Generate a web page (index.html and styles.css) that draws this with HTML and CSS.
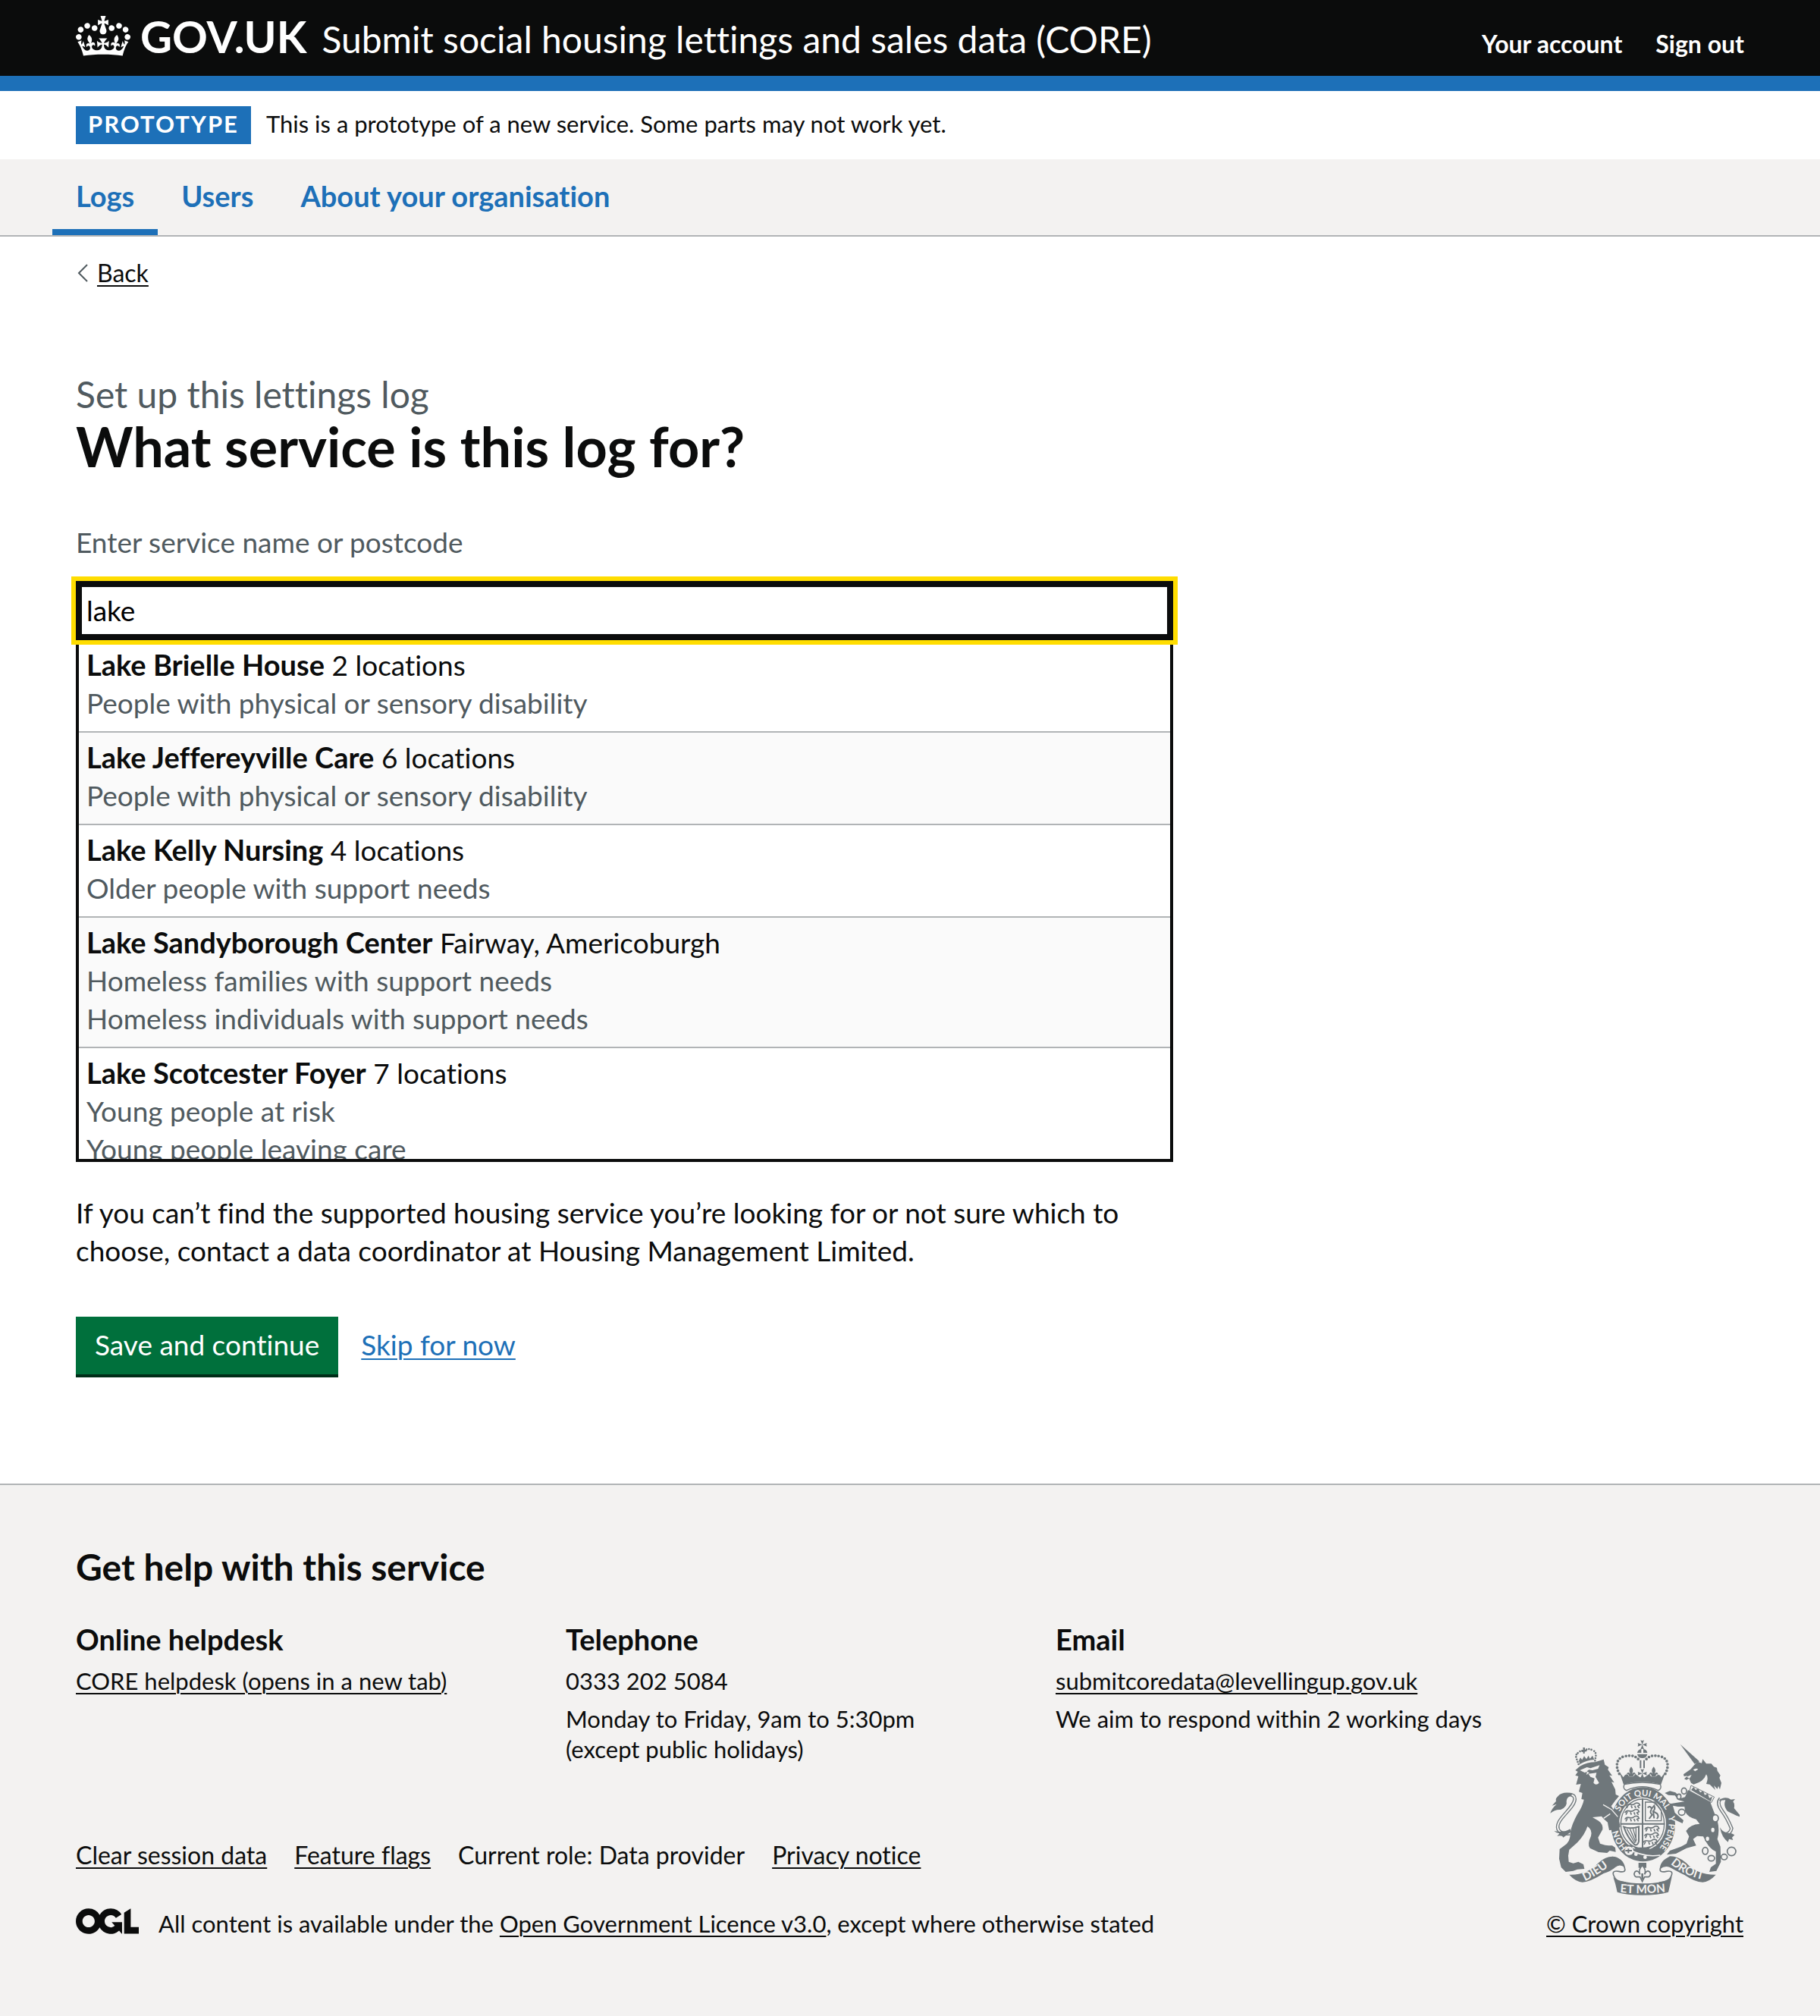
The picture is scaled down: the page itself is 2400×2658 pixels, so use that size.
FILE: index.html
```html
<!DOCTYPE html>
<html lang="en">
<head>
<meta charset="utf-8">
<meta name="viewport" content="width=device-width, initial-scale=1">
<title>What service is this log for? - Submit social housing lettings and sales data (CORE)</title>
<link rel="stylesheet" href="styles.css">
</head>
<body>

<header class="header">
  <div class="header-inner">
    <a class="logo" href="#"><svg class="logo-crown" viewBox="0 0 132 97" aria-hidden="true"><path fill="currentColor" fill-rule="evenodd" d="M25 30.2c3.5 1.5 7.7-.2 9.1-3.7 1.5-3.6-.2-7.8-3.9-9.2-3.6-1.4-7.6.3-9.1 3.9-1.4 3.5.3 7.5 3.9 9zM9 39.5c3.6 1.5 7.8-.2 9.2-3.7 1.5-3.6-.2-7.8-3.9-9.1-3.6-1.5-7.6.2-9.1 3.8-1.4 3.5.3 7.5 3.8 9zM4.4 57.2c3.5 1.5 7.7-.2 9.1-3.8 1.5-3.6-.2-7.7-3.9-9.1-3.5-1.5-7.6.3-9.1 3.8-1.4 3.5.3 7.6 3.9 9.1zm38.3-21.4c3.5 1.5 7.7-.2 9.1-3.8 1.5-3.6-.2-7.7-3.9-9.1-3.6-1.5-7.6.3-9.1 3.8-1.3 3.6.4 7.7 3.9 9.1zm64.4-5.6c-3.6 1.5-7.8-.2-9.1-3.7-1.5-3.6.2-7.8 3.8-9.2 3.6-1.4 7.7.3 9.2 3.9 1.3 3.5-.4 7.5-3.9 9zm15.9 9.3c-3.6 1.5-7.7-.2-9.1-3.7-1.5-3.6.2-7.8 3.7-9.1 3.6-1.5 7.7.2 9.2 3.8 1.5 3.5-.3 7.5-3.8 9zm4.7 17.7c-3.6 1.5-7.8-.2-9.2-3.8-1.5-3.6.2-7.7 3.9-9.1 3.6-1.5 7.7.3 9.2 3.8 1.3 3.5-.4 7.6-3.9 9.1zM89.3 35.8c-3.6 1.5-7.8-.2-9.2-3.8-1.4-3.6.2-7.7 3.9-9.1 3.6-1.5 7.7.3 9.2 3.8 1.4 3.6-.3 7.7-3.9 9.1zM69.7 17.7l8.9 4.7V9.3l-8.9 2.8c-.2-.3-.5-.6-.9-.9L72.4 0H59.6l3.5 11.2c-.3.3-.6.5-.9.9l-8.8-2.8v13.1l8.8-4.7c.3.3.6.7.9.9l-5 15.4v.1c-.2.8-.4 1.6-.4 2.4 0 4.1 3.1 7.5 7 8.1h.2c.3 0 .7.1 1 .1.4 0 .7 0 1-.1h.2c4-.6 7.1-4.1 7.1-8.1 0-.8-.1-1.7-.4-2.4V34l-5.1-15.4c.4-.2.7-.6 1-.9zM66 92.8c16.9 0 32.8 1.1 47.1 3.2 4-16.9 8.9-26.7 14-33.5l-9.6-3.4c1 4.9 1.1 7.2 0 10.2-1.5-1.4-3-4.3-4.2-8.7L108.6 76c2.8-2 5-3.2 7.5-3.3-4.4 9.4-10 11.9-13.6 11.2-4.3-.8-6.3-4.6-5.6-7.9 1-4.7 5.7-5.9 8-.5 4.3-8.7-3-11.4-7.6-8.8 7.1-7.2 7.9-13.5 2.1-21.1-8 6.1-8.1 12.3-4.5 20.8-4.7-5.4-12.1-2.5-9.5 6.2 3.4-5.2 7.9-2 7.2 3.1-.6 4.3-6.4 7.8-13.5 7.2-10.3-.9-10.9-8-11.2-13.8 2.5-.5 7.1 1.8 11 7.3L80.2 60c-4.1 4.4-8 5.3-12.3 5.4 1.4-4.4 8-11.6 8-11.6H55.5s6.4 7.2 7.9 11.6c-4.2-.1-8-1-12.3-5.4l1.4 16.4c3.9-5.5 8.5-7.7 10.9-7.3-.3 5.8-.9 12.8-11.1 13.8-7.2.6-12.9-2.9-13.5-7.2-.7-5 3.8-8.3 7.1-3.1 2.7-8.7-4.6-11.6-9.4-6.2 3.7-8.5 3.6-14.7-4.6-20.8-5.8 7.6-5 13.9 2.2 21.1-4.7-2.6-11.9.1-7.7 8.8 2.3-5.5 7.1-4.2 8.1.5.7 3.3-1.3 7.1-5.7 7.9-3.5.7-9-1.8-13.5-11.2 2.5.1 4.7 1.3 7.5 3.3l-4.7-15.4c-1.2 4.4-2.7 7.2-4.3 8.7-1.1-3-.9-5.3 0-10.2l-9.5 3.4c5 6.9 9.9 16.7 14 33.5 14.8-2.1 30.8-3.2 47.7-3.2z"/></svg><span>GOV.UK</span></a>
    <a class="service-name" href="#">Submit social housing lettings and sales data (CORE)</a>
    <nav class="account" aria-label="Account">
      <a class="account-link" href="#">Your account</a>
      <a class="account-link" href="#">Sign out</a>
    </nav>
  </div>
</header>

<div class="phase">
  <strong class="tag">PROTOTYPE</strong>
  <span class="phase-text">This is a prototype of a new service. Some parts may not work yet.</span>
</div>

<nav class="primary-nav" aria-label="Primary">
  <a class="nav-link nav-link-current" href="#" aria-current="page">Logs</a>
  <a class="nav-link" href="#">Users</a>
  <a class="nav-link" href="#">About your organisation</a>
</nav>

<div class="page">
  <a class="back" href="#">
    <svg class="back-icon" viewBox="0 0 14 24" aria-hidden="true"><path d="M13 1 2 12l11 11" fill="none" stroke="#505a5f" stroke-width="2"/></svg>
    <span class="back-text">Back</span>
  </a>

  <main class="main">
    <form class="form">
      <span class="caption">Set up this lettings log</span>
      <h1 class="title">What service is this log for?</h1>
      <label class="label" for="service">Enter service name or postcode</label>
      <div class="autocomplete">
        <input class="input" id="service" type="text" role="combobox" aria-expanded="true" aria-controls="service-list" autocomplete="off" value="lake">
        <ul class="menu" id="service-list" role="listbox">
          <li class="option" role="option"><b>Lake Brielle House</b> 2 locations <span class="need">People with physical or sensory disability</span></li>
          <li class="option" role="option"><b>Lake Jeffereyville Care</b> 6 locations <span class="need">People with physical or sensory disability</span></li>
          <li class="option" role="option"><b>Lake Kelly Nursing</b> 4 locations <span class="need">Older people with support needs</span></li>
          <li class="option" role="option"><b>Lake Sandyborough Center</b> Fairway, Americoburgh <span class="need">Homeless families with support needs</span> <span class="need">Homeless individuals with support needs</span></li>
          <li class="option" role="option"><b>Lake Scotcester Foyer</b> 7 locations <span class="need">Young people at risk</span> <span class="need">Young people leaving care</span></li>
        </ul>
      </div>
      <p class="help">If you can’t find the supported housing service you’re looking for or not sure which to choose, contact a data coordinator at Housing Management Limited.</p>
      <div class="actions">
        <button class="button" type="submit">Save and continue</button>
        <a class="skip" href="#">Skip for now</a>
      </div>
    </form>
  </main>
</div>

<footer class="footer">
  <div class="footer-main">
    <h2 class="footer-title">Get help with this service</h2>
    <div class="contacts">
      <section class="contact">
        <h3 class="contact-title">Online helpdesk</h3>
        <p class="contact-line"><a class="footer-link" href="#">CORE helpdesk (opens in a new tab)</a></p>
      </section>
      <section class="contact">
        <h3 class="contact-title">Telephone</h3>
        <p class="contact-line">0333 202 5084</p>
        <p class="contact-line">Monday to Friday, 9am to 5:30pm<br>(except public holidays)</p>
      </section>
      <section class="contact">
        <h3 class="contact-title">Email</h3>
        <p class="contact-line"><a class="footer-link" href="#">submitcoredata@levellingup.gov.uk</a></p>
        <p class="contact-line">We aim to respond within 2 working days</p>
      </section>
    </div>
    <ul class="footer-links">
      <li><a class="footer-link" href="#">Clear session data</a></li>
      <li><a class="footer-link" href="#">Feature flags</a></li>
      <li>Current role: Data provider</li>
      <li><a class="footer-link" href="#">Privacy notice</a></li>
    </ul>
    <div class="licence">
      <svg class="ogl" viewBox="0 0 483.2 195.7" role="img" aria-label="Open Government Licence"><path fill="currentColor" d="M421.5 142.8V.1l-50.7 32.3v161.1h112.4v-50.7zm-122.3-9.6A47.12 47.12 0 0 1 221 97.8c0-26 21.1-47.1 47.1-47.1 16.7 0 31.4 8.7 39.7 21.8l42.7-27.2A97.63 97.63 0 0 0 268.1 0c-36.5 0-68.3 20.1-85.1 49.7A98 98 0 0 0 97.8 0C43.9 0 0 43.9 0 97.8s43.9 97.8 97.8 97.8c36.5 0 68.3-20.1 85.1-49.7a97.76 97.76 0 0 0 149.6 25.4l19.4 22.2h3v-87.8h-80l24.3 27.5zM97.8 145c-26 0-47.1-21.1-47.1-47.1s21.1-47.1 47.1-47.1 47.1 21.1 47.1 47.1S123.8 145 97.8 145"/></svg>
      <span>All content is available under the <a class="footer-link" href="#">Open Government Licence v3.0</a>, except where otherwise stated</span>
    </div>
  </div>
  <a class="copyright" href="#">
    <svg class="crest" viewBox="72 70 750 615" aria-hidden="true">
      <defs>
        <g id="cross"><path d="M0 0-7-18Q0-14 7-18ZL18-7Q14 0 18 7ZL7 18Q0 14-7 18ZL-18 7Q-14 0-18-7Z"/></g>
        <g id="fleur"><path d="M0-18C10-6 8 2 3 10C10 2 19 4 17 16C14 8 9 12 8 20H-8C-9 12-14 8-17 16C-19 4-10 2-3 10C-8 2-10-6 0-18Z"/></g>
        <g id="passant"><path d="M-28 2Q-22-8-12-5T6-6Q14-14 24-9L28-2 20 2 26 10M-18-2-24 10M-6 0-2 10M8 0 12 10" fill="none" stroke="#6f777b" stroke-width="5"/></g>
        <path id="garter-left" d="M348 354A103 112 0 0 1 543 395"/>
        <path id="garter-right" d="M540 372Q552 440 496 510"/>
        <path id="garter-hon" d="M378 496Q346 460 338 412"/>
        <path id="ribbon-left" d="M210 628Q265 604 322 556"/>
        <path id="ribbon-mid" d="M349 673Q437 681 532 671"/>
        <path id="ribbon-right" d="M549 560Q600 606 682 624"/>
      </defs>
      <g fill="#6f777b">
        <!-- crown -->
        <use href="#cross" x="437" y="89"/>
        <path d="M417 121Q420 107 433 106V121ZM441 106Q455 107 457 121H441ZM417 126H457Q454 142 437 142T417 126Z"/>
        <path d="M346 204C330 174 334 142 366 135S415 136 424 150M528 204C544 174 540 142 508 135S459 136 450 150" fill="none" stroke="#6f777b" stroke-width="11" stroke-linecap="round" stroke-dasharray="0 13"/>
        <path d="M427 150H433V182H427ZM441 150H447V182H441Z"/>
        <use href="#cross" x="437" y="203"/>
        <use href="#fleur" x="393" y="194"/>
        <use href="#fleur" x="482" y="194"/>
        <path d="M346 196Q356 210 362 218Q370 202 380 208L385 215H401L410 205Q422 214 428 218H446L464 205 472 215H490Q504 200 512 218L529 196 511 246Q437 226 363 246Z"/>
        <path d="M366 246Q437 230 508 246Q516 262 500 270Q437 240 374 270Q358 262 366 246Z" fill="#f3f2f1" stroke="#6f777b" stroke-width="4"/>
        <!-- garter and shield -->
        <ellipse cx="440" cy="404" rx="127" ry="147"/>
        <ellipse cx="438" cy="402" rx="93" ry="105" fill="#f3f2f1"/>
        <ellipse cx="438" cy="402" rx="86" ry="98" fill="none" stroke="#6f777b" stroke-width="4"/>
        <path d="M435 302H441V500H435ZM350 399H526V405H350Z"/>
        <use href="#passant" x="399" y="330"/><use href="#passant" x="396" y="356"/><use href="#passant" x="396" y="382"/>
        <use href="#passant" x="475" y="422"/><use href="#passant" x="473" y="448"/><use href="#passant" x="468" y="474"/>
        <path d="M449 316H488L512 348V390H449Z" fill="none" stroke="#6f777b" stroke-width="4"/>
        <path d="M458 338Q468 328 474 342L484 330Q490 344 480 352L496 362Q504 374 494 382M474 344Q464 356 476 366L464 382M480 354 484 380" fill="none" stroke="#6f777b" stroke-width="6"/>
        <path d="M364 414Q390 424 423 413V472Q418 490 406 484Q378 456 364 414Z" fill="none" stroke="#6f777b" stroke-width="6"/>
        <path d="M376 422 408 478M388 422 412 476M400 420 414 468M412 418V470" fill="none" stroke="#6f777b" stroke-width="4"/>
        <path d="M404 492Q438 500 470 490L460 510Q436 516 412 506Z"/>
        <path d="M380 500Q440 536 508 526" fill="none" stroke="#f3f2f1" stroke-width="5"/>
        <circle cx="382" cy="508" r="20" fill="#f3f2f1"/>
        <path d="M398 494A20 20 0 1 0 394 526M382 500V518M370 508H396" fill="none" stroke="#6f777b" stroke-width="6"/>
        <circle cx="412" cy="522" r="7" fill="#f3f2f1"/><circle cx="448" cy="534" r="7" fill="#f3f2f1"/>
        <!-- lion -->
        <path d="M185 166 176 142Q172 128 182 122M250 152 254 128Q250 112 238 110M182 122Q196 108 206 116Q220 100 238 110" fill="none" stroke="#6f777b" stroke-width="8" stroke-linecap="round" stroke-dasharray="0 10"/>
        <path d="M202 100H210V108H217V116H209V124H203V117H197V109H203ZM186 152 192 140 199 149 207 134 216 146 224 132 230 144 240 132 246 146 248 148Q218 150 190 166Z"/>
        <path d="M172 190 190 174Q220 158 250 158L284 147 289 168 304 178 301 188 318 212 307 210 326 239 315 236 330 266 332 286 345 292 330 310 314 332 334 362 346 395 350 413 332 431 318 426 306 427 302 408 300 396 284 382 276 372 240 376 264 390Q282 402 280 424L262 456 270 480 290 486 304 488 318 488 330 496 332 513 308 508 298 517 264 514 230 498Q218 484 234 450Q240 424 220 412Q210 444 180 476L148 504 144 528 146 552 164 558 184 552 204 562 208 580 180 582 164 588 134 592 116 574 108 540 110 502 126 490Q154 474 152 436Q158 404 180 364Q202 330 206 306L196 304 200 280 186 275 194 244 175 247 184 214 172 210 182 196Z"/>
        <path d="M190 190 218 178 232 182 268 170 262 184 240 190 226 188 210 200ZM224 204 256 200 252 216 266 240Q254 252 244 240L248 222 232 216Z" fill="#f3f2f1"/>
        <path d="M206 190 224 200 216 206M282 326 316 346 340 374M284 380 310 362" fill="none" stroke="#f3f2f1" stroke-width="4"/>
        <path d="M150 440C112 446 92 424 108 394S168 334 170 304Q170 286 146 286" fill="none" stroke="#6f777b" stroke-width="14"/>
        <path d="M150 440C112 446 92 424 108 394S168 334 170 304Q170 286 146 286" fill="none" stroke="#f3f2f1" stroke-width="6"/>
        <path d="M158 280Q118 274 104 292Q92 302 96 312L80 330 98 324Q78 342 73 360Q92 344 114 346Q142 334 137 312 138 296 158 290ZM152 422Q128 438 88 430Q98 440 110 440L100 450Q120 446 124 456Q148 440 154 434Z"/>
        <!-- unicorn -->
        <path d="M587 87 663 155 644 165Z"/>
        <path d="M642 170 656 156 672 162 676 146 690 164 710 164 720 176 732 180 734 192 746 210 742 220 750 240 744 266 738 252 734 264 720 250 726 268 704 246 690 244Q700 220 690 206Q680 236 640 246L630 240 622 222 612 228 603 224 616 212 602 214 600 206 628 186Z"/>
        <path d="M638 188Q650 180 658 186L646 194ZM612 216 632 208 624 222Z" fill="#f3f2f1"/>
        <path d="M618 268 706 316Q718 350 734 388 744 430 734 462L746 492 748 552 730 588 702 592 708 574 728 560 728 512Q704 500 690 474L678 452 654 450 638 462 650 488 612 498 570 520 534 524 546 508 590 492 612 480 622 452 610 430Q626 404 664 402L650 384Q616 376 606 352L604 334 578 334 558 330 566 358 600 388 596 400 566 386 546 362 538 334 526 318 552 322 574 318 604 314 580 308 566 290 540 288 526 280 546 272 568 278 592 300 606 296Z"/>
        <path d="M630 250 722 296 710 318 624 272Z" fill="#f3f2f1" stroke="#6f777b" stroke-width="3"/>
        <path d="M630 268 640 256 648 268 658 262 666 278 678 272 684 288 696 282 702 300 714 294 708 314Z"/>
        <g stroke="#6f777b" stroke-width="5" fill="#f3f2f1">
          <ellipse cx="602" cy="272" rx="10" ry="12"/><ellipse cx="582" cy="294" rx="8" ry="10"/><ellipse cx="593" cy="356" rx="13" ry="12"/>
          <ellipse cx="726" cy="380" rx="12" ry="14"/><ellipse cx="716" cy="426" rx="9" ry="11"/><ellipse cx="695" cy="461" rx="9" ry="11"/>
          <ellipse cx="686" cy="509" rx="11" ry="14"/><ellipse cx="710" cy="538" rx="13" ry="11"/><ellipse cx="761" cy="533" rx="12" ry="11"/><circle cx="790" cy="511" r="17"/>
        </g>
        <path d="M746 302Q730 320 752 350T790 420Q786 442 762 444" fill="none" stroke="#6f777b" stroke-width="14"/>
        <path d="M746 302Q730 320 752 350T790 420Q786 442 762 444" fill="none" stroke="#f3f2f1" stroke-width="6"/>
        <path d="M738 310Q764 290 788 306L804 304 796 314Q804 324 800 340L822 366V374Q792 362 774 352 756 330 766 308ZM744 416Q756 440 790 440L802 446 792 456 796 466 780 462 776 474Q752 458 744 416Z"/>
        <!-- motto ribbon -->
        <path d="M318 534Q360 540 368 580 372 596 344 590 308 584 330 618 336 632 372 634" fill="none" stroke="#6f777b" stroke-width="5"/>
        <path d="M556 534Q514 540 508 580 504 596 532 590 568 584 546 618 540 632 504 634" fill="none" stroke="#6f777b" stroke-width="5"/>
        <path d="M148 603Q216 606 264 556 300 524 336 534 368 550 364 572 346 560 330 574 312 590 284 598 230 632 200 633 172 630 148 603Z"/>
        <path d="M728 603Q654 604 610 556 580 530 546 530 512 550 508 580 526 566 546 574 590 598 604 604 644 632 676 633 704 630 728 603Z"/>
        <path d="M322 612Q340 634 437 638 530 638 554 610 548 640 540 672 500 684 437 684 374 684 338 672 332 640 322 612Z"/>
        <path d="M422 556H453V576H422Z"/>
        <path d="M437 566Q454 584 446 602 454 582 466 592 474 604 462 612H446L437 630 428 612H412Q400 604 408 592 420 582 428 602 420 584 437 566Z" fill="#f3f2f1" stroke="#6f777b" stroke-width="5"/>
        <path d="M433 598H441V622H433Z"/>
      </g>
      <g class="motto">
        <text><textPath href="#garter-left">SOIT QUI MAL</textPath></text>
        <text><textPath href="#garter-right">Y PENSE</textPath></text>
        <text><textPath href="#garter-hon">HON</textPath></text>
        <text class="motto-ribbon"><textPath href="#ribbon-left">DIEU</textPath></text>
        <text class="motto-ribbon"><textPath href="#ribbon-mid">ET MON</textPath></text>
        <text class="motto-ribbon"><textPath href="#ribbon-right">DROIT</textPath></text>
      </g>
    </svg>
    <span class="copyright-text">© Crown copyright</span>
  </a>
</footer>

</body>
</html>
```
FILE: styles.css
```css
:root {
  --black: #0b0c0c;
  --blue: #1d70b8;
  --grey: #505a5f;
  --light: #f3f2f1;
  --border: #b1b4b6;
  --gutter: 100px;
}

* {
  box-sizing: border-box;
}

body {
  margin: 0;
  background: #fff;
  color: var(--black);
  font-family: Lato, "Liberation Sans", sans-serif;
  font-size: 31px;
  font-variant-ligatures: none;
  line-height: 40px;
}

h1, h2, h3, p, ul {
  margin: 0;
  padding: 0;
}

ul {
  list-style: none;
}

a {
  color: inherit;
  text-decoration-thickness: 2px;
  text-underline-offset: 4px;
}

/* Header */
.header {
  background: var(--black);
  border-bottom: 20px solid var(--blue);
  color: #fff;
}

.header-inner {
  display: flex;
  align-items: baseline;
  padding: 18px var(--gutter);
}

.header a {
  text-decoration: none;
}

.logo {
  margin-right: 20px;
  font-size: 58px;
  font-weight: 700;
  line-height: 60px;
}

.logo-crown {
  width: 72px;
  height: 53px;
  margin-right: 13px;
  vertical-align: -4px;
}

.service-name {
  font-size: 48px;
  line-height: 60px;
}

.account {
  display: flex;
  gap: 44px;
  margin-left: auto;
  font-size: 32px;
  font-weight: 700;
}

/* Phase banner */
.phase {
  display: flex;
  align-items: baseline;
  gap: 20px;
  padding: 20px var(--gutter);
}

.tag {
  padding: 0 16px 4px;
  background: var(--blue);
  color: #fff;
  line-height: 46px;
  letter-spacing: 2px;
}

/* Primary navigation */
.primary-nav {
  display: flex;
  padding: 0 69px;
  background: var(--light);
  border-bottom: 2px solid var(--border);
}

.nav-link {
  padding: 28px 31px 24px;
  border-bottom: 8px solid transparent;
  color: var(--blue);
  font-size: 38px;
  font-weight: 700;
  text-decoration: none;
}

.nav-link-current {
  border-bottom-color: var(--blue);
}

/* Page */
.page {
  padding: 28px var(--gutter) 140px;
}

.back {
  display: flex;
  align-items: center;
  gap: 12px;
  width: fit-content;
  padding-left: 2px;
  font-size: 32px;
  text-decoration: none;
}

.back-icon {
  width: 14px;
  height: 24px;
}

.back-text {
  text-decoration: underline;
  text-decoration-thickness: 2px;
  text-underline-offset: 4px;
}

.main {
  width: calc((100% + 60px) * 2 / 3 - 60px);
  margin-top: 110px;
}

.caption {
  display: block;
  color: var(--grey);
  font-size: 48px;
  line-height: 60px;
}

.title {
  font-size: 72px;
  line-height: 76px;
}

.label {
  display: block;
  margin: 64px 0 26px;
  color: var(--grey);
  font-size: 37px;
  line-height: 50px;
}

.input {
  position: relative;
  z-index: 1;
  display: block;
  width: 100%;
  height: 78px;
  padding: 0 10px 2px;
  border: 4px solid var(--black);
  border-radius: 0;
  outline: 6px solid #fd0;
  box-shadow: inset 0 0 0 4px var(--black);
  background: #fff;
  color: #000;
  font: inherit;
  font-size: 37px;
}

.menu {
  max-height: 688px;
  overflow-x: hidden;
  overflow-y: auto;
  scrollbar-width: none;
  border: 4px solid var(--black);
  border-top: 0;
  font-size: 37px;
  line-height: 50px;
}

.option {
  padding: 8px 10px 12px;
  border-bottom: 2px solid var(--border);
}

.option:nth-child(even) {
  background: #fafafa;
}

.option b {
  font-size: 38px;
  line-height: 1;
}

.need {
  display: block;
  color: var(--grey);
}

.help {
  margin-top: 42px;
  font-size: 37px;
  line-height: 50px;
}

.actions {
  display: flex;
  align-items: baseline;
  gap: 30px;
  margin-top: 62px;
}

.button {
  padding: 12px 25px 14px;
  border: 0;
  border-radius: 0;
  border-bottom: 4px solid #002d18;
  background: #00703c;
  color: #fff;
  font: inherit;
  font-size: 37px;
  line-height: 50px;
}

.skip {
  color: var(--blue);
  font-size: 37px;
}

/* Footer */
.footer {
  display: flex;
  align-items: flex-end;
  gap: 60px;
  padding: 78px var(--gutter) 102px;
  border-top: 2px solid var(--border);
  background: var(--light);
}

.footer-main {
  flex: 1;
}

.footer-title {
  font-size: 48px;
  line-height: 60px;
}

.contacts {
  display: grid;
  grid-template-columns: repeat(3, 1fr);
  gap: 60px;
  margin-top: 40px;
}

.contact-title {
  font-size: 38px;
  line-height: 50px;
}

.contact-line {
  margin-top: 10px;
}

.footer-links {
  display: flex;
  flex-wrap: wrap;
  gap: 36px;
  margin-top: 100px;
  font-size: 32px;
}

.licence {
  display: flex;
  gap: 26px;
  margin-top: 50px;
}

.ogl {
  width: 83px;
  height: 34px;
}

.copyright {
  display: flex;
  flex-direction: column;
  align-items: center;
  gap: 17px;
  min-width: 262px;
  text-decoration: none;
}

.crest {
  width: 250px;
  height: 205px;
}

.copyright-text {
  text-decoration: underline;
  text-decoration-thickness: 2px;
  text-underline-offset: 4px;
}

.motto {
  fill: var(--light);
  font-size: 34px;
  font-weight: 700;
}

.motto-ribbon {
  font-size: 46px;
}
```
